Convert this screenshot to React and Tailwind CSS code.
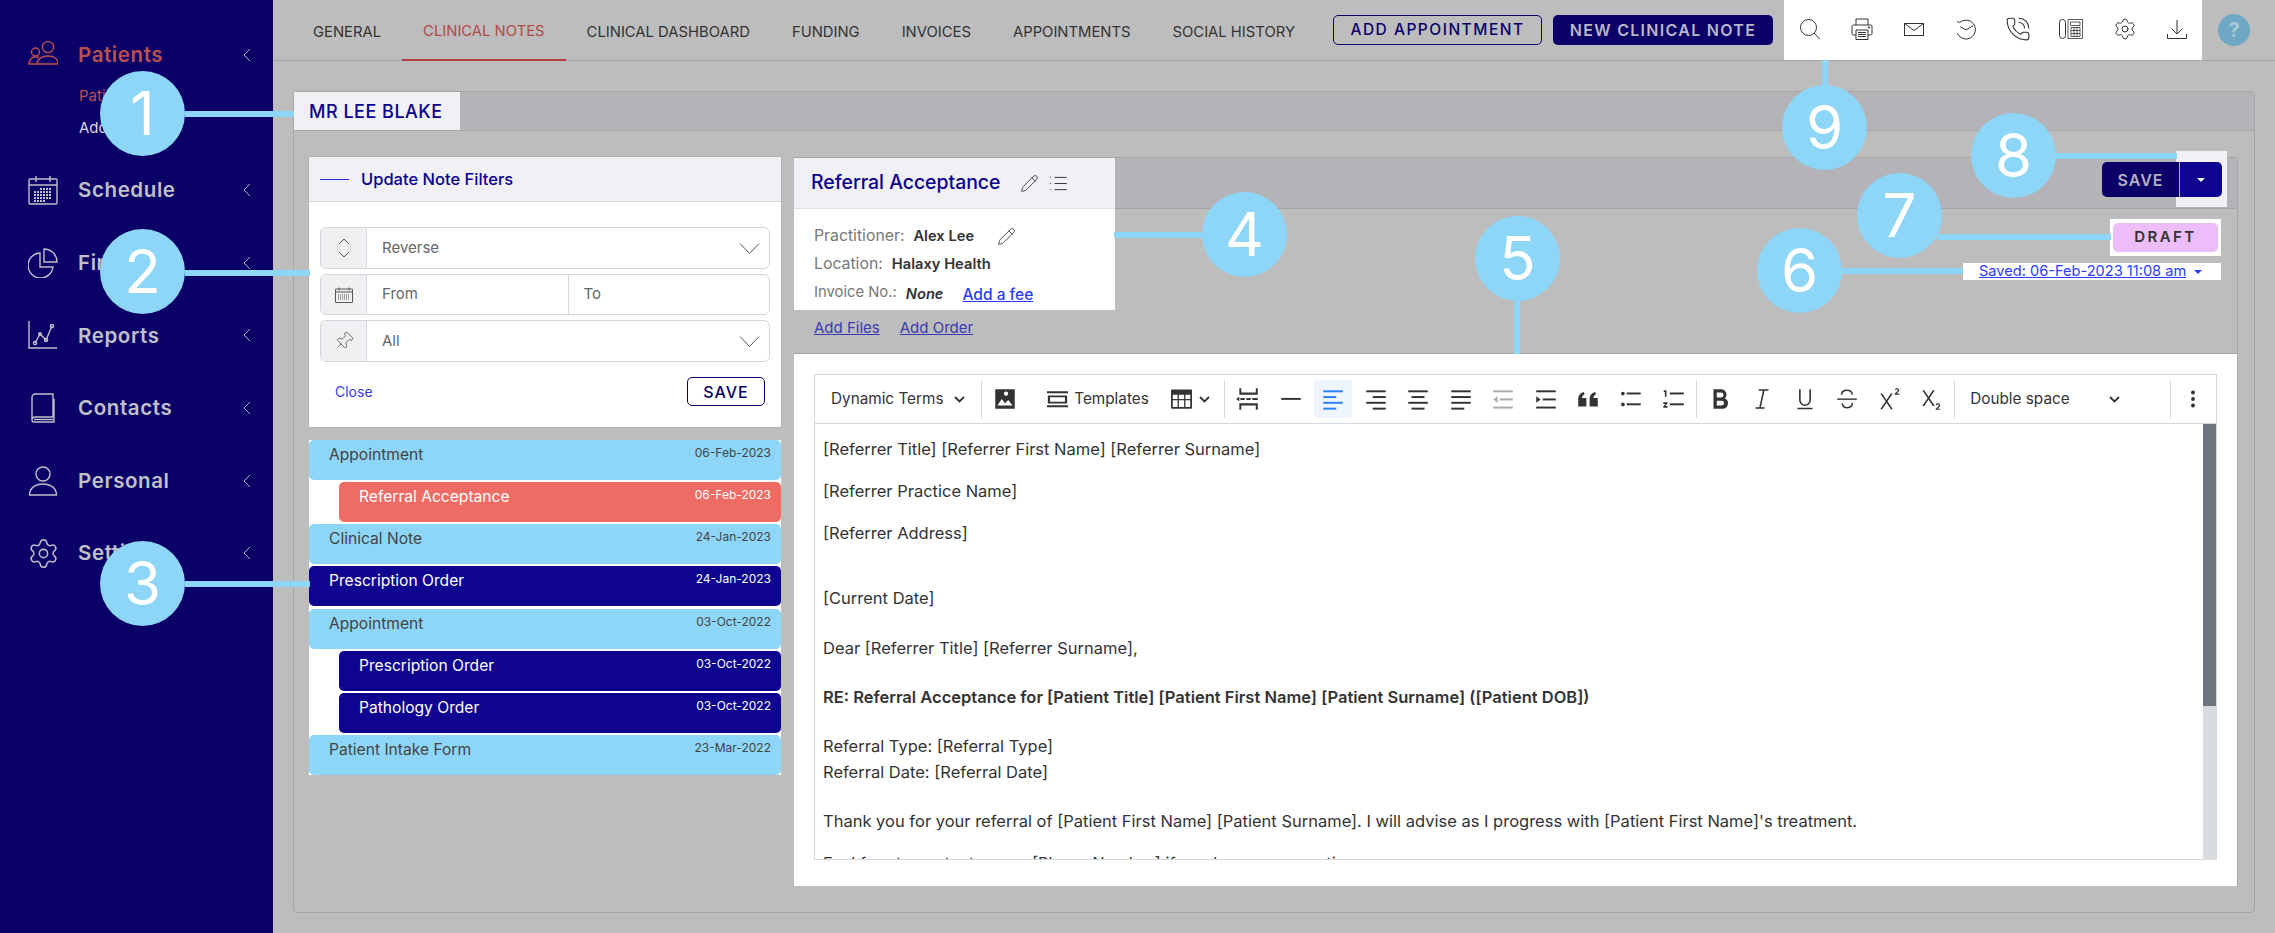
import React from "react";
import { PhoneCall, Settings, Pencil, List, Pin } from "lucide-react";

const Chev = ({ className = "" }) => (
  <svg viewBox="0 0 8 14" className={className} fill="none" stroke="currentColor" strokeWidth="1"><path d="M7 1L1 7l6 6" /></svg>
);
const Ic = ({ children, className = "" }) => (
  <svg viewBox="0 0 30 30" className={className} fill="none" stroke="currentColor" strokeWidth="1.4">{children}</svg>
);
const Grid = () => (
  <g strokeWidth="2" strokeDasharray="2 1">
    <path d="M12 14h12M6 17h18M6 20h18M6 23h18M6 26h12" />
  </g>
);
const PatientsI = (p) => (
  <Ic {...p}><circle cx="20" cy="7" r="5.6" /><path d="M9 24c0-5 5-8 11-8s10 3 10 8H9z" /><circle cx="7.5" cy="12" r="4" /><path d="M11 17.500c-1-.5-2-.7-3.500-.7C4 16.800 1 19.500 1 24h8" /></Ic>
);
const CalI = (p) => (
  <Ic {...p}><rect x="1" y="4" width="28" height="25" rx="1" /><path d="M1 10h28M8 1v6M22 1v6" /><Grid /></Ic>
);
const PieI = (p) => (
  <Ic {...p}><path d="M12 5a12.500 12.500 0 1 0 13 14H12z" /><path d="M16 1a13 13 0 0 1 13 13H16z" /></Ic>
);
const RepI = (p) => (
  <Ic {...p}><path d="M1 1v27h28" /><path d="M7 23l5-9 6 6 6-14" /><circle cx="7" cy="23" r="1.600" /><circle cx="12" cy="14" r="1.300" /><circle cx="18" cy="20" r="1.600" /><circle cx="24" cy="6" r="1.600" /></Ic>
);
const BookI = (p) => (
  <Ic {...p}><path d="M4 4a3 3 0 0 1 3-3h18v23H7a3 3 0 0 0-3 2.500zM4 26.500V27a2 2 0 0 0 2 2h20V6" /><path d="M6 26.500h19" /></Ic>
);
const PersonI = (p) => (
  <Ic {...p}><circle cx="15" cy="8" r="7" /><path d="M1.500 29c0-7 6-11 13.500-11s13.500 4 13.500 11H1.500z" /></Ic>
);

const navItems = [
  ["Schedule", CalI],
  ["Finance", PieI],
  ["Reports", RepI],
  ["Contacts", BookI],
  ["Personal", PersonI],
  ["Settings", null],
];

function Sidebar() {
  return (
    <aside className="w-[273px] shrink-0 bg-[#0a0068] text-[#c0c0c8] pt-[30px]">
      <div className="h-[50px] flex items-center pl-[28px] pr-[22px] text-[#b9504e]">
        <PatientsI className="w-[30px] h-[30px] mr-[20px]" />
        <span className="flex-1 pt-[1px] text-[20.5px] font-semibold tracking-[0.6px]">Patients</span>
        <Chev className="w-[8px] h-[14px] text-[#b0b0c0]" />
      </div>
      <div className="h-[74px] pl-[79px] text-[15px]">
        <div className="h-[32px] flex items-center text-[#b9504e]">Patient List</div>
        <div className="h-[32px] flex items-center text-[#d8d8e0]">Add Patient</div>
      </div>
      {navItems.map(([t, I]) => (
        <div key={t} className="h-[72.6px] flex items-center pl-[28px] pr-[22px]">
          {I ? <I className="w-[30px] h-[30px] mr-[20px]" /> : <Settings strokeWidth={1.1} className="w-[33px] h-[33px] -ml-[1px] mr-[18px]" />}
          <span className="flex-1 pt-[1px] text-[20.5px] font-semibold tracking-[0.6px]">{t}</span>
          <Chev className="w-[8px] h-[14px] text-[#b0b0c0]" />
        </div>
      ))}
    </aside>
  );
}

const tabs = ["GENERAL", "CLINICAL NOTES", "CLINICAL DASHBOARD", "FUNDING", "INVOICES", "APPOINTMENTS", "SOCIAL HISTORY"];

const TopIc = ({ children, w = 20, h = 21 }) => (
  <svg viewBox={`0 0 ${w} ${h}`} width={w} height={h} fill="none" stroke="#333" strokeWidth="1">{children}</svg>
);

function TopBar() {
  return (
    <header className="h-[61px] shrink-0 border-b border-[#a5a5a8] flex items-stretch pl-[19px]">
      <nav className="flex w-[1022px] shrink-0">
        {tabs.map((t) => (
          <div
            key={t}
            className={
              t === "CLINICAL NOTES"
                ? "px-[21px] pt-[4px] shrink-0 whitespace-nowrap flex items-center text-[14.8px] text-[#b24a47] border-b-2 border-[#b0413e] -mb-px"
                : "px-[21px] pt-[4px] shrink-0 whitespace-nowrap flex items-center text-[14.8px] text-[#333]"
            }
          >
            {t}
          </div>
        ))}
      </nav>
      <div className="ml-[19px] flex items-center gap-[11px] pb-[1px]">
        <button className="w-[209px] h-[30px] rounded-[5px] border border-[#0a0068] text-[#0a0068] text-[15.5px] font-medium tracking-[1.5px]">ADD APPOINTMENT</button>
        <button className="w-[220px] h-[30px] rounded-[5px] bg-[#0a0068] text-[#b8b8c8] text-[16px] font-semibold tracking-[1.3px]">NEW CLINICAL NOTE</button>
      </div>
      <div className="ml-[11px] w-[418px] bg-white flex items-center text-[#333] pb-[2px]">
        <div className="w-[52px] flex justify-center">
          <TopIc><circle cx="8.500" cy="8.500" r="8" /><path d="M14 14l6 6.500" /></TopIc>
        </div>
        <div className="w-[53px] flex justify-center">
          <TopIc w={22} h={22}>
            <path d="M5 7V1h12v6M5 17H2.500A1.500 1.500 0 0 1 1 15.500v-7A1.500 1.500 0 0 1 2.500 7h17A1.500 1.500 0 0 1 21 8.500v7a1.500 1.500 0 0 1-1.500 1.500H17" />
            <path d="M5 12h12v9.500H5zM7 14.500h8M7 16.500h8M7 18.500h8" /><circle cx="18" cy="9.500" r=".7" />
          </TopIc>
        </div>
        <div className="w-[51px] flex justify-center">
          <TopIc h={13}><rect x=".5" y=".5" width="19" height="12" /><path d="M.5.500L10 7.500 19.500.500" /></TopIc>
        </div>
        <div className="w-[52px] flex justify-center">
          <TopIc><path d="M3.500 3.600A9.500 9.500 0 1 1 1.200 14.200M1 2.500l2.500 1.100M4.300 7.700L10 11l7-4.300" /></TopIc>
        </div>
        <div className="w-[53px] flex justify-center"><PhoneCall strokeWidth={1} className="w-[26px] h-[26px]" /></div>
        <div className="w-[54px] flex justify-center">
          <TopIc w={24} h={20}>
            <rect x=".5" y=".5" width="6" height="19" rx="3" />
            <path d="M9 .5h14.500v19H9zM11.500 3h9.500v3.500h-9.500zM12 8.500h9v9h-9zM12 11.500h9M12 14.500h9M15 8.500v9M18 8.500v9" strokeWidth=".8" />
          </TopIc>
        </div>
        <div className="w-[54px] flex justify-center"><Settings strokeWidth={1} className="w-[24px] h-[24px]" /></div>
        <div className="w-[50px] flex justify-center">
          <TopIc h={19}><path d="M10 0v14M4.500 8.500L10 14l5.500-5.500M.5 14v4.500h19V14" /></TopIc>
        </div>
      </div>
      <div className="ml-[16px] self-center w-[32px] h-[32px] rounded-full bg-[#6fa8c4] flex items-center justify-center text-[#a9c8d8] text-[20px] font-bold">?</div>
    </header>
  );
}

const Down = () => (
  <svg viewBox="0 0 20 11" className="w-[21px] h-[11px] text-[#555] ml-auto mr-[9px]" fill="none" stroke="currentColor" strokeWidth="1"><path d="M.5.500L10 10.500 19.500.500" /></svg>
);
const SortI = () => (
  <svg viewBox="0 0 12 20" className="w-[12px] h-[20px] text-[#555]" fill="none" stroke="currentColor" strokeWidth="1"><path d="M1 6l5-5 5 5M1 14l5 5 5-5" /></svg>
);
const SmallCal = () => (
  <svg viewBox="0 0 18 16" className="w-[18px] h-[16px] text-[#555]" fill="none" stroke="currentColor" strokeWidth="1">
    <rect x=".5" y="2" width="17" height="13.500" rx=".5" /><path d="M.5 5h17M4 .5v3M14 .5v3" />
    <path d="M3 8h12M3 10h12M3 12h12" strokeDasharray="1 1" />
  </svg>
);

function Field({ icon, children }) {
  return (
    <div className="flex rounded-[6px] border border-[#d3d6dc] overflow-hidden">
      <div className="w-[46px] shrink-0 bg-[#f0f0f2] border-r border-[#d3d6dc] flex items-center justify-center">{icon}</div>
      {children}
    </div>
  );
}

function Filters() {
  return (
    <section className="bg-white h-[270px] shadow-[0_0_1px_#888]">
      <div className="h-[45px] bg-[#f0f0f5] border-b border-[#d3d3da] flex items-center pl-[11px]">
        <span className="w-[29px] h-[1px] bg-[#2a2ae0] mr-[12px]"></span>
        <span className="text-[16.5px] font-medium text-[#0a0090]">Update Note Filters</span>
      </div>
      <div className="pt-[25px] px-[11px] flex flex-col gap-[5px] text-[15px] text-[#666]">
        <Field icon={<SortI />}>
          <div className="h-[40px] flex-1 flex items-center pl-[15px]">Reverse<Down /></div>
        </Field>
        <Field icon={<SmallCal />}>
          <div className="h-[39px] flex-1 flex items-center pl-[15px] border-r border-[#d3d6dc]">From</div>
          <div className="h-[39px] flex-1 flex items-center pl-[15px]">To</div>
        </Field>
        <Field icon={<Pin strokeWidth={1} className="w-[20px] h-[20px] rotate-45 text-[#555]" />}>
          <div className="h-[40px] flex-1 flex items-center pl-[15px]">All<Down /></div>
        </Field>
      </div>
      <div className="mt-[15px] pl-[26px] pr-[16px] flex items-center justify-between">
        <span className="text-[14px] text-[#3a3ae8]">Close</span>
        <button className="w-[78px] h-[29px] rounded-[5px] border border-[#0a0068] text-[#0a0068] text-[16px] font-medium tracking-[1px]">SAVE</button>
      </div>
    </section>
  );
}

const notes = [
  ["Appointment", "06-Feb-2023", "p"],
  ["Referral Acceptance", "06-Feb-2023", "r"],
  ["Clinical Note", "24-Jan-2023", "p"],
  ["Prescription Order", "24-Jan-2023", "n"],
  ["Appointment", "03-Oct-2022", "p"],
  ["Prescription Order", "03-Oct-2022", "c"],
  ["Pathology Order", "03-Oct-2022", "c"],
  ["Patient Intake Form", "23-Mar-2022", "p"],
];
const noteClass = {
  p: "bg-[#8dd6f8] text-[#444]",
  r: "ml-[30px] bg-[#ef6c65] text-white",
  n: "bg-[#0e0490] text-white",
  c: "ml-[30px] bg-[#0e0490] text-white",
};

function Notes() {
  return (
    <div className="mt-[13px] bg-white flex flex-col gap-[2.15px]">
      {notes.map(([t, d, k], i) => (
        <div key={i} className={"h-[40px] rounded-[5px] pl-[20px] pr-[10px] flex justify-between " + noteClass[k]}>
          <span className="text-[15.6px] leading-[20px] mt-[5px]">{t}</span>
          <span className="text-[12px] leading-[16px] mt-[5px]">{d}</span>
        </div>
      ))}
    </div>
  );
}

const Sep = () => <div className="w-px h-[38px] bg-[#d3d8dc] shrink-0"></div>;
const Tb = ({ children, className = "" }) => (
  <div className={"w-[38px] h-[38px] mx-[2.25px] shrink-0 flex items-center justify-center rounded-[4px] " + className}>{children}</div>
);
const Sv = ({ children, className = "w-[26px] h-[26px]" }) => (
  <svg viewBox="0 0 24 24" className={className} fill="currentColor">{children}</svg>
);
const TChev = () => (
  <svg viewBox="0 0 11 7" className="w-[11px] h-[7px] text-[#333]" fill="none" stroke="currentColor" strokeWidth="1.800"><path d="M1 1l4.500 4.500L10 1" /></svg>
);
const bars = (rows) => rows.map(([x, y, w], i) => <rect key={i} x={x} y={y} width={w} height="1.800" />);

function Toolbar() {
  return (
    <div className="h-[49px] border-b border-[#d3d8dc] flex items-center text-[15.3px] text-[#333]">
      <div className="w-[166px] shrink-0 pl-[16px] flex items-center gap-[11px]"><span className="pt-[1px]">Dynamic Terms</span> <TChev /></div>
      <Sep />
      <Tb className="ml-[4px]"><Sv><path d="M3 3h18v18H3zM15 7a2 2 0 1 0 0 .01zM5 18h14l-4-5-3 3-3-4z" fillRule="evenodd" /></Sv></Tb>
      <div className="w-[141px] shrink-0 flex items-center pl-[21px] gap-[6px]">
        <Sv className="w-[21px] h-[24px]"><path d="M0 3h24v2.500H0zM0 19h24v2.500H0zM1 8h22v9H1zm2.500 2v5h17v-5z" fillRule="evenodd" /></Sv>
        <span className="pt-[1px]">Templates</span>
      </div>
      <div className="w-[57px] shrink-0 flex items-center pl-[4px] gap-[7px]">
        <Sv className="w-[21px] h-[24px]"><path d="M1 1h22a1 1 0 0 1 1 1v20a1 1 0 0 1-1 1H1a1 1 0 0 1-1-1V2a1 1 0 0 1 1-1zm1 6v5h5.500V7zm7 0v5h6V7zm7.500 0v5H22V7zM2 13.500V21h5.500v-7.500zm7 0V21h6v-7.500zm7.500 0V21H22v-7.500z" fillRule="evenodd" /></Sv>
        <TChev />
      </div>
      <Sep />
      <Tb className="ml-[4px]"><Sv><path d="M4 2h1.800v4h13.400V2H21v6H4zM4 22h1.800v-4h13.400v4H21v-6H4zM1 12l3-2v4zM5 11h4v2H5zM10.500 11h4v2h-4zM16 11h5v2h-5z" /></Sv></Tb>
      <Tb><Sv>{bars([[3, 11, 18]])}</Sv></Tb>
      <Tb className="bg-[#eff5fe] text-[#2b7fff]"><Sv>{bars([[3, 4, 18], [3, 9.300, 12], [3, 14.600, 18], [3, 20, 12]])}</Sv></Tb>
      <Tb><Sv>{bars([[3, 4, 18], [9, 9.300, 12], [3, 14.600, 18], [9, 20, 12]])}</Sv></Tb>
      <Tb><Sv>{bars([[3, 4, 18], [6, 9.300, 12], [3, 14.600, 18], [6, 20, 12]])}</Sv></Tb>
      <Tb><Sv>{bars([[3, 4, 18], [3, 9.300, 18], [3, 14.600, 18], [3, 20, 12]])}</Sv></Tb>
      <Tb className="text-[#aaa]"><Sv>{bars([[3, 4, 18], [9, 11.500, 12], [3, 19, 18]])}<path d="M3 12.400l4-3v6z" /></Sv></Tb>
      <Tb><Sv>{bars([[3, 4, 18], [9, 11.500, 12], [3, 19, 18]])}<path d="M7 12.400l-4-3v6z" /></Sv></Tb>
      <Tb><Sv><path d="M3 19v-7c0-3.500 2-5.500 5-6.500l1 2c-2 1-2.500 2-2.500 3.500H10.500v8zM13.500 19v-7c0-3.500 2-5.500 5-6.500l1 2c-2 1-2.500 2-2.500 3.500H21v8z" /></Sv></Tb>
      <Tb><Sv>{bars([[8, 6, 13], [8, 16, 13]])}<circle cx="4.500" cy="7" r="1.700" /><circle cx="4.500" cy="17" r="1.700" /></Sv></Tb>
      <Tb><Sv>{bars([[9, 6, 13], [9, 16, 13]])}<path d="M3.500 4h2.500v6H4.500V5.500h-1zM3 15h4v1L5 18.500h2V20H3v-1l2-2.500H3z" /></Sv></Tb>
      <div className="ml-[1px]"><Sep /></div>
      <Tb className="ml-[4px]"><Sv><path d="M6 3h7a5 5 0 0 1 3.500 8.500A5 5 0 0 1 14 21H6zm3 3v4.500h4a2.250 2.250 0 0 0 0-4.500zm0 7.500V18h4.500a2.250 2.250 0 0 0 0-4.500z" fillRule="evenodd" /></Sv></Tb>
      <Tb><Sv><path d="M9 3h9v1.300h-3.700L11 19.700h3.500V21H6v-1.300h3.500L12.800 4.300H9z" /></Sv></Tb>
      <Tb><Sv><path d="M6.500 3H8v10a4 4 0 0 0 8 0V3h1.500v10a5.500 5.500 0 0 1-11 0zM5 20h14v1.500H5z" /></Sv></Tb>
      <Tb><Sv><path d="M3 11.500h18v1.300H3z" /><path d="M17 8c-.5-2.500-2.500-4-5-4-3 0-5 1.500-5 4M7.500 16c.5 2.500 2 4 4.500 4 3 0 5-1.500 5-4.500" fill="none" stroke="currentColor" strokeWidth="1.400" /></Sv></Tb>
      <Tb><Sv><path d="M3 7h1.800l4 6 4-6h1.800l-4.900 7 4.900 7.500h-1.800l-4-6-4 6H3l5-7.500zM16.500 3.500c0-1 1-1.500 2-1.500s2 .6 2 1.700c0 1-1 2-2.500 3.300h2.600v1h-4.200v-1c2-1.800 2.800-2.500 2.800-3.300 0-.5-.3-.8-.8-.8s-.8.300-.8.800z" /></Sv></Tb>
      <Tb><Sv><path d="M3 4h1.800l4 6 4-6h1.800l-4.900 7 4.900 7.500h-1.800l-4-6-4 6H3l5-7.500zM15.500 17.500c0-1 1-1.500 2-1.500s2 .6 2 1.700c0 1-1 2-2.500 3.300h2.600v1h-4.200v-1c2-1.800 2.800-2.500 2.800-3.300 0-.5-.3-.8-.8-.8s-.8.300-.8.800z" /></Sv></Tb>
      <div className="ml-[1px]"><Sep /></div>
      <div className="w-[215px] shrink-0 pl-[15px] flex items-center">
        <span className="w-[139px] pt-[1px]">Double space</span><TChev />
      </div>
      <Sep />
      <Tb className="ml-[3px]"><Sv><circle cx="12" cy="6" r="1.800" /><circle cx="12" cy="12" r="1.800" /><circle cx="12" cy="18" r="1.800" /></Sv></Tb>
    </div>
  );
}

const letter = [
  ["[Referrer Title] [Referrer First Name] [Referrer Surname]", "mt-[12px]"],
  ["[Referrer Practice Name]", "mt-[16px]"],
  ["[Referrer Address]", "mt-[16px]"],
  ["[Current Date]", "mt-[39px]"],
  ["Dear [Referrer Title] [Referrer Surname],", "mt-[24px]"],
  ["RE: Referral Acceptance for [Patient Title] [Patient First Name] [Patient Surname] ([Patient DOB])", "mt-[23px] font-semibold"],
  ["Referral Type: [Referral Type]", "mt-[23px]"],
  ["Referral Date: [Referral Date]", "mt-0"],
  ["Thank you for your referral of [Patient First Name] [Patient Surname]. I will advise as I progress with [Patient First Name]'s treatment.", "mt-[23px]"],
  ["Feel free to contact me on [Phone Number] if you have any questions.", "mt-[16px]"],
];

function Editor() {
  return (
    <div className="mt-[20px] mx-[20px] h-[486px] border border-[#d3d8dc] flex flex-col overflow-hidden">
      <Toolbar />
      <div className="flex-1 min-h-0 flex">
        <div className="flex-1 overflow-hidden pl-[8px] text-[16.5px] leading-[26px] text-[#333]">
          {letter.map(([t, c]) => <p key={t} className={c}>{t}</p>)}
        </div>
        <div className="w-[13px] bg-[#d8dcdf]"><div className="h-[282px] bg-[#6c757d]"></div></div>
      </div>
    </div>
  );
}

function NotePane() {
  return (
    <section className="flex-1 min-w-0 flex flex-col border-t border-r border-[#a5a5a8] rounded-tr-[4px] h-[730px]">
      <div className="h-[51px] shrink-0 bg-[#b3b3b8] border-b border-[#a5a5a8] flex items-start justify-between">
        <div className="w-[321px] h-[51px] bg-[#f0f0f5] border-b border-[#e0e0e6] flex items-center pl-[17px]">
          <span className="text-[19.400px] text-[#0a0090] font-medium">Referral Acceptance</span>
          <Pencil strokeWidth={1.1} className="ml-[20px] w-[19px] h-[19px] text-[#333]" />
          <List strokeWidth={1.1} className="ml-[9px] w-[21px] h-[21px] text-[#333]" />
        </div>
        <div className="relative mt-[4px] mr-[15px] flex">
          <div className="absolute right-[-5px] top-[-11px] w-[51px] h-[56px] bg-[#f0f0f5]"></div>
          <div className="relative w-[77px] h-[35px] rounded-l-[5px] bg-[#0a0068] text-[#b0b0c0] text-[16px] font-semibold tracking-[1px] flex items-center justify-center">SAVE</div>
          <div className="relative w-[43px] h-[35px] rounded-r-[5px] bg-[#0e0490] border-l border-[#b0b0d0] flex items-center justify-center">
            <span className="w-0 h-0 border-x-[4px] border-x-transparent border-t-[4px] border-t-white"></span>
          </div>
        </div>
      </div>
      <div className="h-[145px] shrink-0 border-b border-[#a5a5a8] flex justify-between">
        <div>
          <div className="w-[321px] h-[101px] bg-white text-[15.800px] text-[#777] pl-[20px] pt-[14px]">
            <div className="h-[26px] flex items-center">Practitioner:<b className="ml-[9px] text-[14.700px] font-semibold text-[#333]">Alex Lee</b><Pencil strokeWidth={1.1} className="ml-[23px] w-[19px] h-[19px] text-[#333]" /></div>
            <div className="mt-[2px] h-[26px] flex items-center">Location:<b className="ml-[9px] text-[14.700px] font-semibold text-[#333]">Halaxy Health</b></div>
            <div className="mt-[2px] h-[26px] flex items-center text-[14.800px]">Invoice No.:<i className="ml-[9px] mt-[5px] text-[14.700px] font-semibold text-[#333]">None</i><a className="ml-[19px] mt-[5px] text-[15.500px] font-medium underline text-[#2a3cff]">Add a fee</a></div>
          </div>
          <div className="pl-[20px] mt-[7px] flex gap-[20px] text-[15px] text-[#3a3ab0] underline"><span>Add Files</span><span>Add Order</span></div>
        </div>
        <div className="pr-[16px] pt-[10px] flex flex-col items-end">
          <div className="w-[111px] h-[37px] bg-white flex items-center justify-center">
            <span className="w-[105px] h-[29px] rounded-[5px] bg-[#ecbdf8] flex items-center justify-center text-[15px] font-semibold tracking-[2.4px] text-[#333]">DRAFT</span>
          </div>
          <div className="mt-[7px] w-[258px] h-[17px] bg-white flex items-center pl-[16px] text-[14.600px] text-[#2a3cff]">
            <span className="underline">Saved: 06-Feb-2023 11:08 am</span>
            <span className="ml-[8px] w-0 h-0 border-x-[4px] border-x-transparent border-t-[4px] border-t-[#2a3cff]"></span>
          </div>
        </div>
      </div>
      <div className="h-[532px] shrink-0 bg-white">
        <Editor />
      </div>
    </section>
  );
}

function Panel() {
  return (
    <main className="mx-[20px] mt-[30px] h-[822px] rounded-[4px] border border-[#a5a5a8]">
      <div className="h-[39px] bg-[#b3b3b8] border-b border-[#a5a5a8] rounded-t-[4px]">
        <div className="w-[166px] h-[38px] bg-[#f0f0f5] flex items-center pl-[15px] text-[18px] font-medium tracking-[.5px] text-[#0a0090]">MR LEE BLAKE</div>
      </div>
      <div className="pt-[26px] pl-[15px] pr-[16px] flex gap-[13px]">
        <div className="w-[472px] shrink-0">
          <Filters />
          <Notes />
        </div>
        <NotePane />
      </div>
    </main>
  );
}

const Bubble = ({ className, children }) => (
  <div className={"absolute w-[85px] h-[85px] rounded-full bg-[#8dd6f8] text-white text-[60px] leading-[85px] text-center " + className}>{children}</div>
);
const Wire = ({ className }) => <div className={"absolute bg-[#8dd6f8] " + className}></div>;

function Callouts() {
  return (
    <>
      <Wire className="left-[185px] top-[111px] w-[109px] h-[6px]" />
      <Wire className="left-[185px] top-[270px] w-[125px] h-[6px]" />
      <Wire className="left-[185px] top-[581px] w-[125px] h-[6px]" />
      <Wire className="left-[1114px] top-[232px] w-[90px] h-[6px]" />
      <Wire className="left-[1514px] top-[300px] w-[6px] h-[54px]" />
      <Wire className="left-[1840px] top-[268px] w-[123px] h-[6px]" />
      <Wire className="left-[1937px] top-[234px] w-[174px] h-[6px]" />
      <Wire className="left-[2054px] top-[153px] w-[123px] h-[6px]" />
      <Wire className="left-[1822px] top-[60px] w-[6px] h-[26px]" />
      <Bubble className="left-[100px] top-[71px]">1</Bubble>
      <Bubble className="left-[100px] top-[229px]">2</Bubble>
      <Bubble className="left-[100px] top-[541px]">3</Bubble>
      <Bubble className="left-[1202px] top-[192px]">4</Bubble>
      <Bubble className="left-[1475px] top-[216px]">5</Bubble>
      <Bubble className="left-[1757px] top-[228px]">6</Bubble>
      <Bubble className="left-[1857px] top-[173px]">7</Bubble>
      <Bubble className="left-[1971px] top-[113px]">8</Bubble>
      <Bubble className="left-[1782px] top-[85px]">9</Bubble>
    </>
  );
}

export default function App() {
  return (
    <div className="relative w-[2275px] h-[933px] overflow-hidden flex bg-[#bdbdbd] font-['Inter',sans-serif]">
      <Sidebar />
      <div className="flex-1 min-w-0 flex flex-col">
        <TopBar />
        <Panel />
      </div>
      <Callouts />
    </div>
  );
}
